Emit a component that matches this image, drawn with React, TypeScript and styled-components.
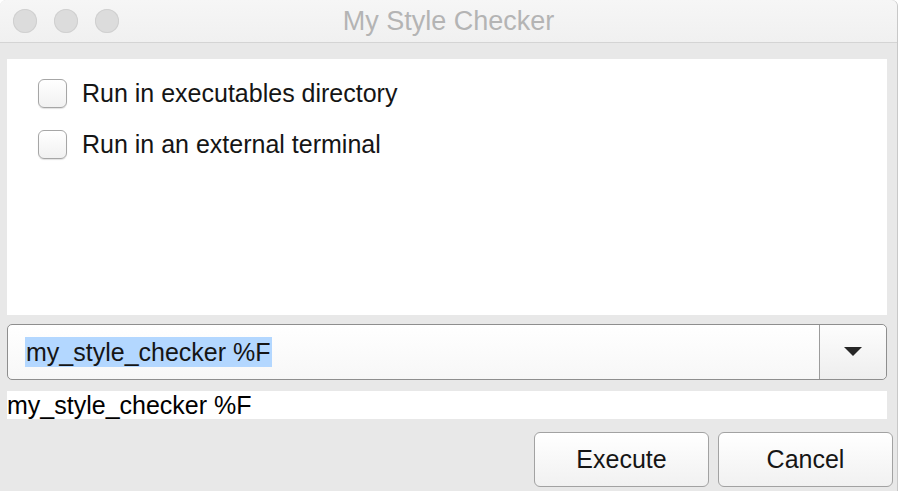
import * as React from 'react'
import styled, { createGlobalStyle } from 'styled-components'

const GlobalStyle = createGlobalStyle`
  html, body {
    margin: 0;
    padding: 0;
    background: #ffffff;
    font-family: "Liberation Sans", Arial, sans-serif;
  }
`

const Window = styled.div`
  width: 897px;
  height: 491px;
  background: #e8e8e8;
  border-radius: 6px 6px 0 0;
  box-shadow: 1px 0 0 #c8c8c8;
  display: flex;
  flex-direction: column;
  overflow: hidden;
`

const TitleBar = styled.div`
  height: 42px;
  flex: none;
  background: linear-gradient(#f6f6f6, #f0f0f0);
  border-bottom: 1px solid #d4d4d4;
  display: flex;
  align-items: center;
  position: relative;
  padding-left: 13px;
  gap: 17px;
`

const Light = styled.span`
  width: 24px;
  height: 24px;
  border-radius: 50%;
  background: #dcdcdc;
  box-shadow: inset 0 0 0 1px #d0d0d0;
`

const Title = styled.div`
  position: absolute;
  left: 0;
  right: 0;
  text-align: center;
  font-size: 27px;
  color: #b4b4b4;
  pointer-events: none;
`

const Body = styled.div`
  flex: 1;
  display: flex;
  flex-direction: column;
  padding: 16px 10px 0 7px;
`

const OptionsPanel = styled.div`
  background: #ffffff;
  height: 256px;
  padding: 20px 0 0 31px;
  display: flex;
  flex-direction: column;
  gap: 22px;
  box-sizing: border-box;
`

const CheckRow = styled.label`
  display: flex;
  align-items: center;
  gap: 15px;
  font-size: 25px;
  color: #151515;
  height: 29px;
`

const Box = styled.span`
  width: 27px;
  height: 27px;
  border: 1px solid #a6a6a6;
  border-radius: 6px;
  background: linear-gradient(#ffffff, #f1f1f1);
  box-shadow: 0 1px 1px rgba(0, 0, 0, 0.12);
`

const Combo = styled.div`
  margin-top: 9px;
  height: 54px;
  border: 1px solid #8e8e8e;
  border-radius: 5px;
  background: linear-gradient(#ffffff, #f7f7f7);
  display: flex;
`

const ComboText = styled.div`
  flex: 1;
  display: flex;
  align-items: center;
  padding-left: 17px;
`

const Selected = styled.span`
  background: #b3d7ff;
  font-size: 25px;
  color: #151515;
  padding: 2px 1px;
  line-height: 26px;
`

const DropButton = styled.div`
  width: 66px;
  border-left: 1px solid #9c9c9c;
  background: linear-gradient(#fdfdfd, #eeeeee);
  display: flex;
  align-items: center;
  justify-content: center;
  border-radius: 0 5px 5px 0;
`

const Preview = styled.div`
  margin-top: 11px;
  height: 28px;
  background: #ffffff;
  font-size: 25px;
  line-height: 28px;
  color: #000000;
`

const Buttons = styled.div`
  margin-top: 13px;
  display: flex;
  justify-content: flex-end;
  gap: 9px;
  margin-right: -6px;
`

const Button = styled.button`
  width: 175px;
  height: 55px;
  border: 1px solid #a2a2a2;
  border-radius: 6px;
  background: linear-gradient(#ffffff, #f1f1f1);
  font-family: "Liberation Sans", Arial, sans-serif;
  font-size: 25px;
  color: #151515;
  padding: 0;
`

const options = ['Run in executables directory', 'Run in an external terminal']

export default function App() {
  return (
    <>
      <GlobalStyle />
      <Window>
        <TitleBar>
          <Light />
          <Light />
          <Light />
          <Title>My Style Checker</Title>
        </TitleBar>
        <Body>
          <OptionsPanel>
            {options.map((o) => (
              <CheckRow key={o}>
                <Box />
                {o}
              </CheckRow>
            ))}
          </OptionsPanel>
          <Combo>
            <ComboText>
              <Selected>my_style_checker %F</Selected>
            </ComboText>
            <DropButton>
              <svg width="18" height="10" viewBox="0 0 18 10">
                <path d="M0 0 H18 L9 9 Z" fill="#262626" />
              </svg>
            </DropButton>
          </Combo>
          <Preview>my_style_checker %F</Preview>
          <Buttons>
            <Button>Execute</Button>
            <Button>Cancel</Button>
          </Buttons>
        </Body>
      </Window>
    </>
  )
}
